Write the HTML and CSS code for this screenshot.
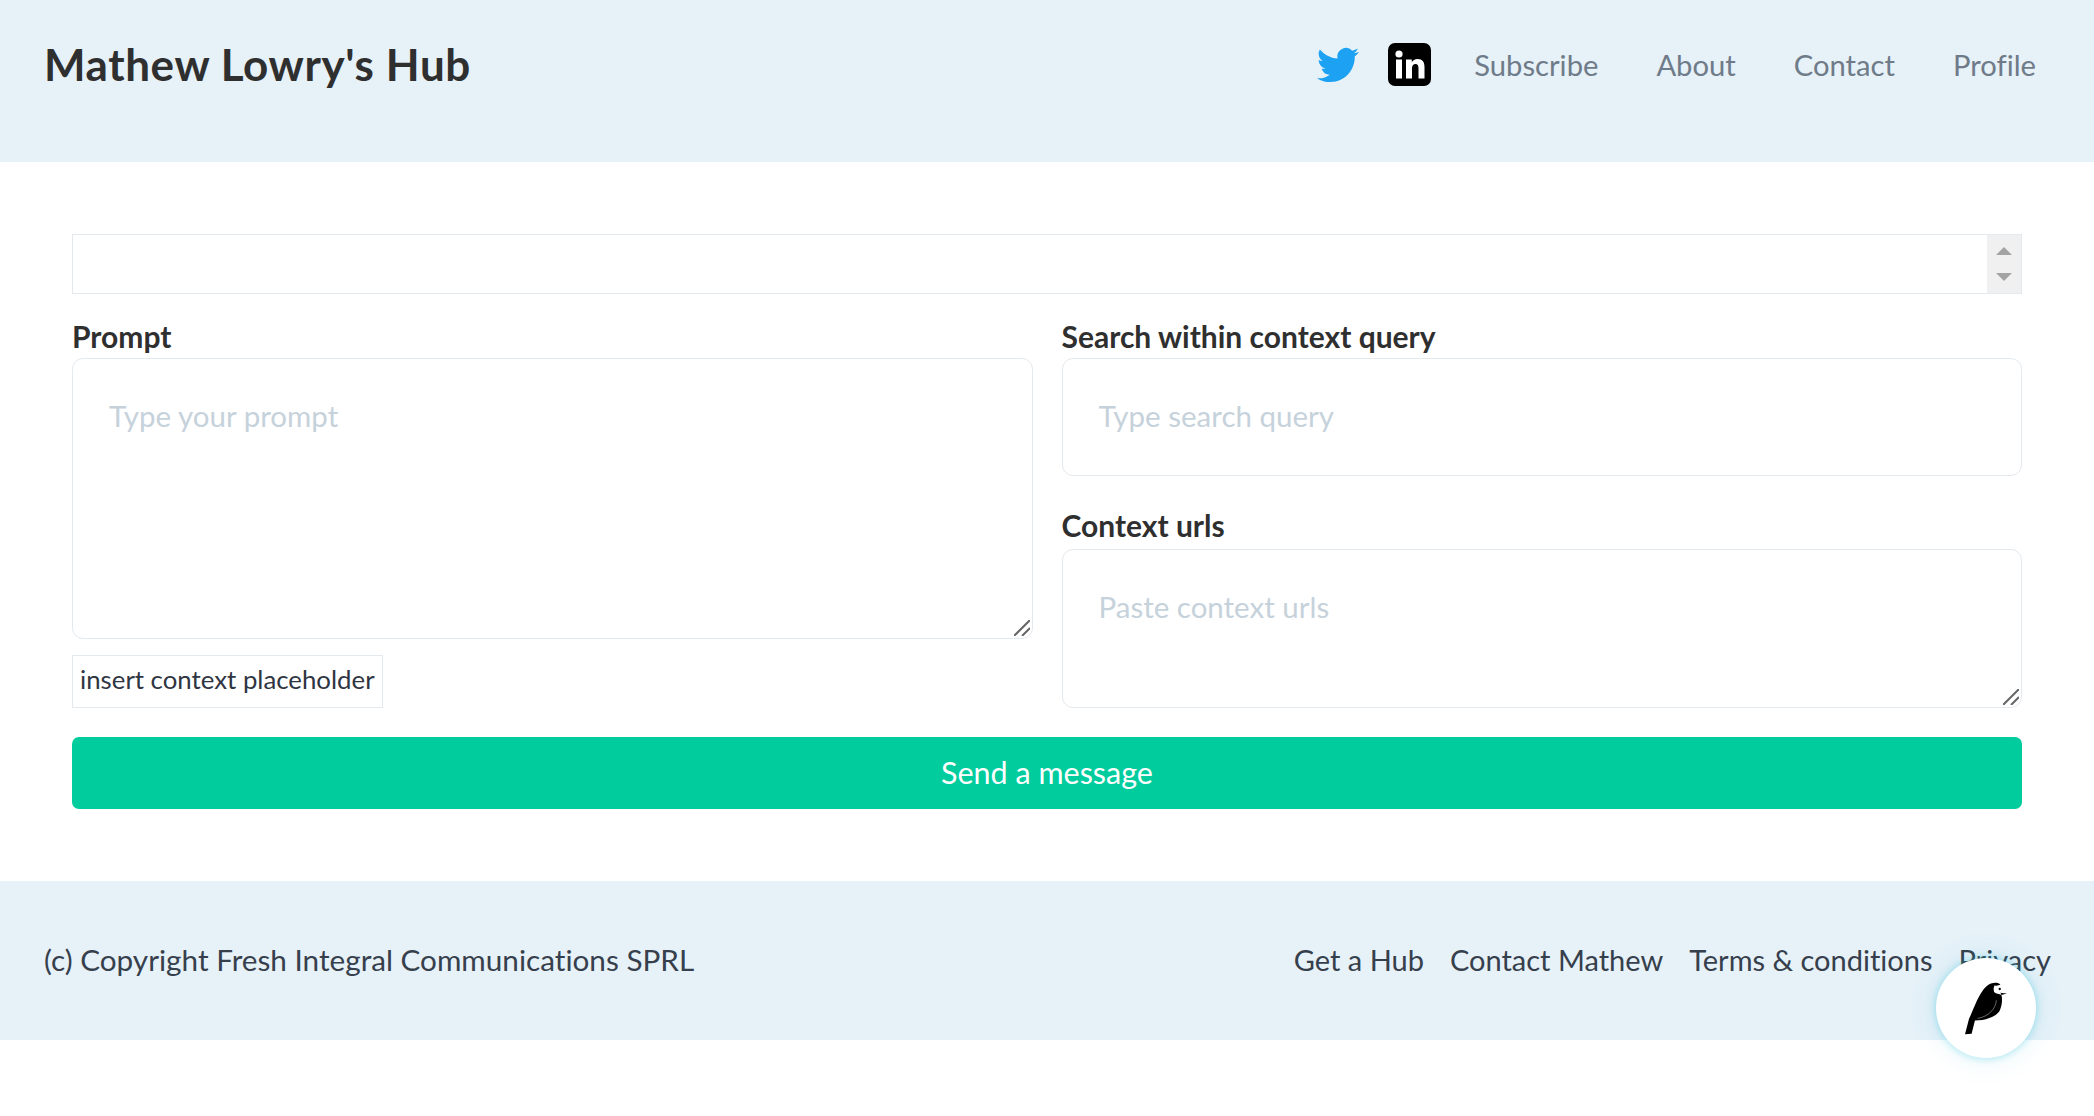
FILE: index.html
```html
<!DOCTYPE html>
<html lang="en">
<head>
    <meta charset="UTF-8">
    <title>Mathew Lowry's Hub</title>
    <link rel="stylesheet" href="styles.css">
</head>
<body>
    <header class="site-header">
        <a class="site-title" href="#">Mathew Lowry's Hub</a>
        <nav class="site-nav">
            <a class="nav-icon" href="#" aria-label="Twitter">
                <svg class="icon-twitter" viewBox="0 0 24 24"><path d="M23.95 4.57a10 10 0 0 1-2.82.77 4.96 4.96 0 0 0 2.16-2.72c-.95.55-2 .96-3.12 1.19a4.92 4.92 0 0 0-8.38 4.48C7.69 8.1 4.07 6.13 1.64 3.16a4.82 4.82 0 0 0-.67 2.48c0 1.71.87 3.21 2.19 4.1a4.9 4.9 0 0 1-2.23-.62v.06a4.92 4.92 0 0 0 3.95 4.83 4.9 4.9 0 0 1-2.21.08 4.94 4.94 0 0 0 4.6 3.42A9.87 9.87 0 0 1 0 19.54a14 14 0 0 0 7.56 2.21c9.05 0 14-7.5 14-13.98 0-.21 0-.42-.02-.63a9.94 9.94 0 0 0 2.46-2.55z"/></svg>
            </a>
            <a class="nav-icon" href="#" aria-label="LinkedIn">
                <svg class="icon-linkedin" viewBox="0 0 43 43">
                    <rect width="43" height="43" rx="7" fill="#000"/>
                    <circle cx="11" cy="11" r="3.6" fill="#fff"/>
                    <rect x="8" y="16.5" width="6" height="19" fill="#fff"/>
                    <path d="M18 16.5h5.8v2.7c1-1.8 3-3.2 5.8-3.2 5 0 6.9 3 6.9 8.2v11.3h-6V25.4c0-2.6-.7-4.3-2.9-4.3-2.500 0-3.600 1.800-3.600 4.300v10.100h-6z" fill="#fff"/>
                </svg>
            </a>
            <a class="nav-link" href="#">Subscribe</a>
            <a class="nav-link" href="#">About</a>
            <a class="nav-link" href="#">Contact</a>
            <a class="nav-link" href="#">Profile</a>
        </nav>
    </header>

    <main class="chat-form">
        <div class="select-box">
            <div class="select-spinner">
                <span class="arrow-up"></span>
                <span class="arrow-down"></span>
            </div>
        </div>

        <div class="form-columns">
            <div class="form-col">
                <label class="field-label" for="prompt">Prompt</label>
                <div class="field-wrap field-grow">
                    <textarea id="prompt" class="field" placeholder="Type your prompt"></textarea>
                    <svg class="resize-grip" viewBox="0 0 16 16"><path d="M0 16 16 0M8 16l8-8"/></svg>
                </div>
                <button class="insert-btn" type="button">insert context placeholder</button>
            </div>
            <div class="form-col">
                <label class="field-label" for="query">Search within context query</label>
                <input id="query" class="field field-input" type="text" placeholder="Type search query">
                <label class="field-label field-label-next" for="urls">Context urls</label>
                <div class="field-wrap field-urls">
                    <textarea id="urls" class="field" placeholder="Paste context urls"></textarea>
                    <svg class="resize-grip" viewBox="0 0 16 16"><path d="M0 16 16 0M8 16l8-8"/></svg>
                </div>
            </div>
        </div>

        <button class="send-btn" type="button">Send a message</button>
    </main>

    <footer class="site-footer">
        <span class="copyright">(c) Copyright Fresh Integral Communications SPRL</span>
        <div class="footer-links">
            <a href="#">Get a Hub</a>
            <a href="#">Contact Mathew</a>
            <a href="#">Terms &amp; conditions</a>
            <a href="#">Privacy</a>
        </div>
    </footer>

    <a class="wagtail-btn" href="#" aria-label="Wagtail userbar">
        <svg viewBox="0 0 130 160" class="wagtail-bird">
            <path d="M0 158 L12 112 C28 78 42 32 66 12 C80 0 100 0 107 8 L92 12 C100 18 104 24 106 31 L110 33 L127 35 L110 39 C114 52 112 72 104 88 C92 106 60 116 30 116 L20 156 Z" fill="#000"/>
            <path d="M90 10 C100 14 106 22 108 33 L110 39 C104 36 94 36 88 30 C86 22 86 16 90 10 Z" fill="#fff"/>
            <circle cx="105" cy="21" r="3.5" fill="#000"/>
            <path d="M95 55 C92 82 72 104 38 110" stroke="#fff" stroke-width="1.200" fill="none"/>
        </svg>
    </a>
</body>
</html>
```

FILE: styles.css
```css
html, body {
    margin: 0;
    padding: 0;
    background-color: #fff;
}

body {
    font-family: Lato, "Noto Sans", sans-serif;
    font-variant-ligatures: none;
    font-size: 29px;
    color: #2f2f2f;
}

a {
    text-decoration: none;
    color: inherit;
}

/* header */
.site-header {
    display: flex;
    justify-content: space-between;
    height: 162px;
    box-sizing: border-box;
    padding: 42px 58px 0 44px;
    background-color: #e6f1f8;
}

.site-title {
    font-size: 44px;
    font-weight: 700;
    line-height: 44px;
    letter-spacing: 0.6px;
}

.site-nav {
    display: flex;
    align-items: flex-start;
    height: 46px;
}

.nav-icon {
    display: block;
    margin-right: 29px;
    height: 46px;
}

.nav-icon:nth-child(2) {
    margin-right: 28px;
}

.icon-twitter {
    display: block;
    width: 42px;
    height: 42px;
    fill: #1da1f2;
    margin-top: 2px;
}

.icon-linkedin {
    display: block;
    width: 43px;
    height: 43px;
    margin-top: 1px;
}

.nav-link {
    color: #6f7b88;
    font-size: 29.2px;
    line-height: 46px;
    margin-left: 15px;
    margin-right: 43px;
}

.nav-link:last-child {
    margin-right: 0;
}

/* form */
.chat-form {
    padding: 72px;
}

.select-box {
    display: flex;
    justify-content: flex-end;
    height: 60px;
    box-sizing: border-box;
    border: 1px solid #e4e9ee;
}

.select-spinner {
    display: flex;
    flex-direction: column;
    align-items: center;
    justify-content: center;
    gap: 18px;
    width: 34px;
    background-color: #f0f0f1;
}

.arrow-up,
.arrow-down {
    width: 0;
    height: 0;
    border-left: 8px solid transparent;
    border-right: 8px solid transparent;
}

.arrow-up {
    border-bottom: 8px solid #a3a3a3;
}

.arrow-down {
    border-top: 8px solid #a3a3a3;
}

.form-columns {
    display: grid;
    grid-template-columns: 1fr 1fr;
    gap: 29px;
    margin-top: 22px;
}

.form-col {
    display: flex;
    flex-direction: column;
    align-items: flex-start;
}

.field-label {
    font-size: 30px;
    font-weight: 700;
    line-height: 40px;
    padding-bottom: 2px;
}

.field-label-next {
    margin-top: 29px;
    line-height: 40px;
    padding-bottom: 4px;
}

.field {
    display: block;
    width: 100%;
    height: 100%;
    box-sizing: border-box;
    padding: 35px 36px 37px;
    border: 1px solid #e4e9ee;
    border-radius: 11px;
    outline: none;
    font-family: inherit;
    font-size: 29.5px;
    line-height: 44px;
    color: inherit;
    background-color: #fff;
    resize: none;
}

.field::placeholder {
    color: #c6d2db;
    opacity: 1;
}

.field-wrap {
    position: relative;
    width: 100%;
}

.field-grow {
    flex: 1;
}

.field-input {
    height: 118px;
    padding: 34px 36px 38px;
}

.field-urls {
    height: 159px;
}

.resize-grip {
    position: absolute;
    right: 3px;
    bottom: 3px;
    width: 16px;
    height: 16px;
    fill: none;
    stroke: #666;
    stroke-width: 2;
}

.insert-btn {
    margin-top: 16px;
    height: 53px;
    padding: 0 7px 6px;
    border: 1px solid #e4e9ee;
    background-color: #fff;
    font-family: inherit;
    font-variant-ligatures: none;
    font-size: 25.8px;
    color: #2f3542;
}

.send-btn {
    display: block;
    width: 100%;
    height: 72px;
    margin-top: 29px;
    padding-bottom: 4px;
    border: none;
    border-radius: 7px;
    background-color: #00cc9e;
    color: #fff;
    font-family: inherit;
    font-size: 30.5px;
}

/* footer */
.site-footer {
    display: flex;
    justify-content: space-between;
    align-items: center;
    box-sizing: border-box;
    height: 159px;
    padding: 0 43px 3px 44px;
    background-color: #e6f1f8;
    color: #36404c;
}

.copyright {
    font-size: 29.7px;
}

.footer-links {
    display: flex;
    gap: 26px;
}

/* floating button */
.wagtail-btn {
    position: fixed;
    right: 58px;
    bottom: 58px;
    display: flex;
    align-items: center;
    justify-content: center;
    width: 100px;
    height: 100px;
    border-radius: 50%;
    background-color: #fff;
    box-shadow: 0 0 8px rgba(0, 180, 210, 0.35), 0 0 30px rgba(0, 180, 210, 0.12);
}

.wagtail-bird {
    width: 43px;
    height: 53px;
}
```
